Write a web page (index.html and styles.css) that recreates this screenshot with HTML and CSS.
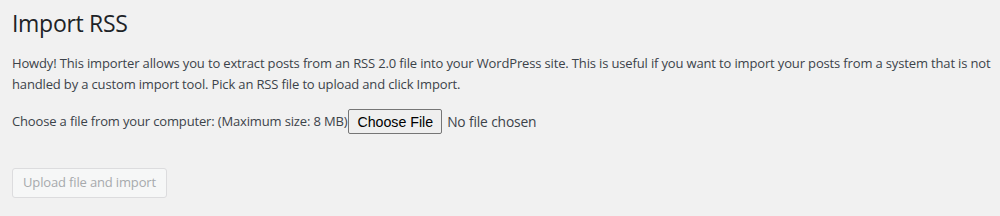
FILE: index.html
```html
<!DOCTYPE html>
<html lang="en">
<head>
    <meta charset="UTF-8">
    <title>Import RSS</title>
    <link rel="stylesheet" href="styles.css">
</head>
<body>
    <div class="wrap">
        <h1 class="title">Import RSS</h1>
        <p class="intro">Howdy! This importer allows you to extract posts from an RSS 2.0 file into your WordPress site. This is useful if you want to import your posts from a system that is not handled by a custom import tool. Pick an RSS file to upload and click Import.</p>
        <div class="upload_row">
            <span class="upload_label">Choose a file from your computer: (Maximum size: 8 MB)</span>
            <span class="file_btn">Choose File</span>
            <span class="file_name">No file chosen</span>
        </div>
        <div class="submit">
            <button class="import_btn" disabled>Upload file and import</button>
        </div>
    </div>
</body>
</html>
```

FILE: styles.css
```css
body{
    margin: 0;
    background-color: #f1f1f1;
    color: #3c434a;
    font-family: "Open Sans", "Noto Sans", sans-serif;
    font-size: 13px;
    letter-spacing: -0.15px;
    overflow: hidden;
}
.wrap{
    padding: 0 4px 0 12px;
}
.title{
    margin: 0;
    padding: 9px 0 4px;
    font-size: 23px;
    font-weight: 400;
    line-height: 1.3;
    letter-spacing: -0.3px;
    color: #1d2327;
}
.intro{
    margin: 10px 0 14px;
    line-height: 1.62;
}
.upload_row{
    display: flex;
    align-items: center;
}
.file_btn{
    margin-left: 1px;
    padding: 4px 8px 3px;
    font-family: "Liberation Sans", Arial, sans-serif;
    font-size: 14.2px;
    line-height: 16px;
    letter-spacing: 0;
    color: #000;
    background-color: #efefef;
    border: 1px solid #767676;
    border-radius: 2px;
}
.file_name{
    margin-left: 5px;
    font-size: 13.8px;
}
.submit{
    padding: 34px 0 0;
}
.import_btn{
    font-family: inherit;
    font-size: 13px;
    letter-spacing: -0.15px;
    line-height: 2.15;
    padding: 0 10px;
    color: #a7aaad;
    background-color: #f6f7f7;
    border: 1px solid #dcdcde;
    border-radius: 3px;
}
```
